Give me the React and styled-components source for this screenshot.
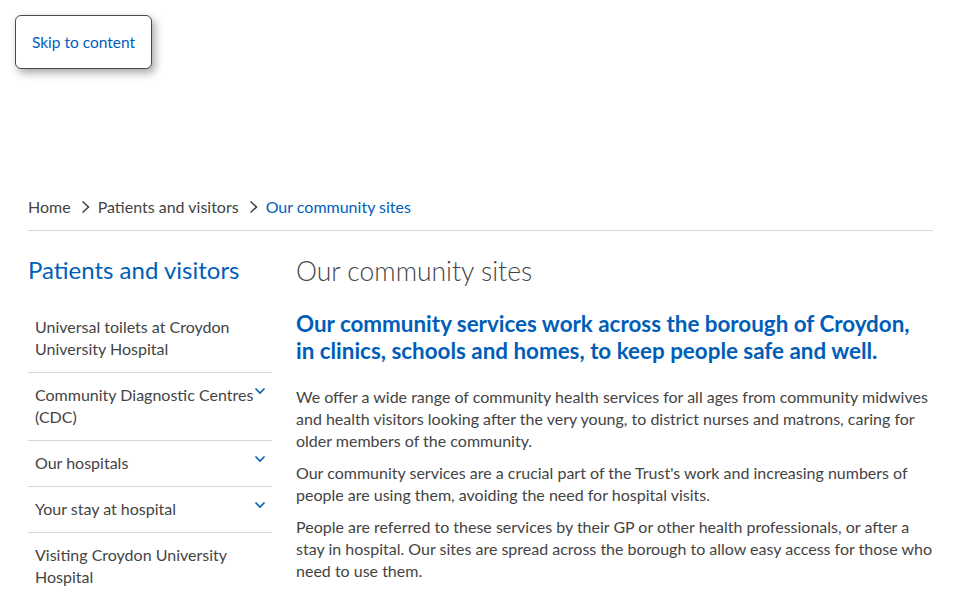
import React from 'react'
import styled, { createGlobalStyle } from 'styled-components'

const GlobalStyle = createGlobalStyle`
  body {
    margin: 0;
    font-family: Lato, "Open Sans", sans-serif;
    color: #444;
    background: #fff;
  }
  * { box-sizing: border-box; }
`;

const Page = styled.div`
  width: 960px;
  min-height: 600px;
`;

const SkipBar = styled.div`
  height: 180px;
  padding: 15px 0 0 15px;
`;

const SkipLink = styled.a`
  display: inline-flex;
  align-items: center;
  justify-content: center;
  width: 137px;
  height: 54px;
  padding-bottom: 1px;
  border: 1px solid #4a4a4a;
  border-radius: 6px;
  background: #fff;
  box-shadow: 3px 4px 8px rgba(0, 0, 0, 0.35);
  color: #005eb8;
  font-size: 15.5px;
  text-decoration: none;
`;

const Wrapper = styled.div`
  margin: 0 27px 0 28px;
`;

const Breadcrumb = styled.nav`
  display: flex;
  align-items: center;
  gap: 9px;
  height: 51px;
  padding-top: 3px;
  border-bottom: 1px solid #d8d8d8;
  font-size: 16px;
`;

const Crumb = styled.a`
  color: ${p => (p.$current ? '#005eb8' : '#444')};
  text-decoration: none;
`;

const Sep = styled.svg`
  width: 10px;
  height: 14px;
  margin-right: -1px;
`;

const Columns = styled.div`
  display: grid;
  grid-template-columns: 244px 1fr;
  gap: 24px;
  padding-top: 24px;
`;

const SideTitle = styled.h2`
  margin: 0 0 20px;
  font-size: 24px;
  font-weight: 400;
  line-height: 30px;
  color: #005eb8;
`;

const SideList = styled.ul`
  list-style: none;
  margin: 0;
  padding: 0;
`;

const SideItem = styled.li`
  display: flex;
  justify-content: space-between;
  align-items: flex-start;
  padding: 11px 6px 12px 7px;
  border-top: ${p => (p.$first ? 'none' : '1px solid #d8d8d8')};
  font-size: 16px;
  line-height: 22px;
  color: #444;
`;

const Label = styled.span`
  flex: 1;
  min-width: 0;
`;

const Chevron = styled.svg`
  flex: none;
  width: 12px;
  height: 8px;
  margin-top: 3px;
`;

const Main = styled.main``;

const Title = styled.h1`
  margin: 0 0 23px;
  font-size: 26.5px;
  font-weight: 300;
  line-height: 32px;
  color: #444;
`;

const Lead = styled.p`
  margin: 0 0 22px;
  font-size: 22.4px;
  font-weight: 700;
  line-height: 27px;
  color: #005eb8;
`;

const Para = styled.p`
  margin: 0 0 10px;
  font-size: 16px;
  line-height: 22px;
  color: #444;
`;

const ArrowRight = () => (
  <Sep viewBox="0 0 10 14">
    <path d="M2.5 1.5l6 5.5-6 5.5" fill="none" stroke="#444" strokeWidth="1.6" />
  </Sep>
);

const Down = () => (
  <Chevron viewBox="0 0 12 8">
    <path d="M1.5 1.5l4.5 4.5 4.5-4.5" fill="none" stroke="#005eb8" strokeWidth="1.6" />
  </Chevron>
);

const items = [
  { label: 'Universal toilets at Croydon University Hospital' },
  { label: 'Community Diagnostic Centres (CDC)', more: true },
  { label: 'Our hospitals', more: true },
  { label: 'Your stay at hospital', more: true },
  { label: 'Visiting Croydon University Hospital' },
];

const App = () => {
  return (
    <Page>
      <GlobalStyle />
      <SkipBar>
        <SkipLink href="#content">Skip to content</SkipLink>
      </SkipBar>
      <Wrapper>
        <Breadcrumb>
          <Crumb href="#">Home</Crumb>
          <ArrowRight />
          <Crumb href="#">Patients and visitors</Crumb>
          <ArrowRight />
          <Crumb $current>Our community sites</Crumb>
        </Breadcrumb>
        <Columns>
          <aside>
            <SideTitle>Patients and visitors</SideTitle>
            <SideList>
              {items.map((item, i) => (
                <SideItem key={item.label} $first={i === 0}>
                  <Label>{item.label}</Label>
                  {item.more && <Down />}
                </SideItem>
              ))}
            </SideList>
          </aside>
          <Main id="content">
            <Title>Our community sites</Title>
            <Lead>
              Our community services work across the borough of Croydon, in clinics, schools and
              homes, to keep people safe and well.
            </Lead>
            <Para>
              We offer a wide range of community health services for all ages from community
              midwives and health visitors looking after the very young, to district nurses and
              matrons, caring for older members of the community.
            </Para>
            <Para>
              Our community services are a crucial part of the Trust's work and increasing numbers
              of people are using them, avoiding the need for hospital visits.
            </Para>
            <Para>
              People are referred to these services by their GP or other health professionals, or
              after a stay in hospital. Our sites are spread across the borough to allow easy access
              for those who need to use them.
            </Para>
          </Main>
        </Columns>
      </Wrapper>
    </Page>
  )
}

export default App
